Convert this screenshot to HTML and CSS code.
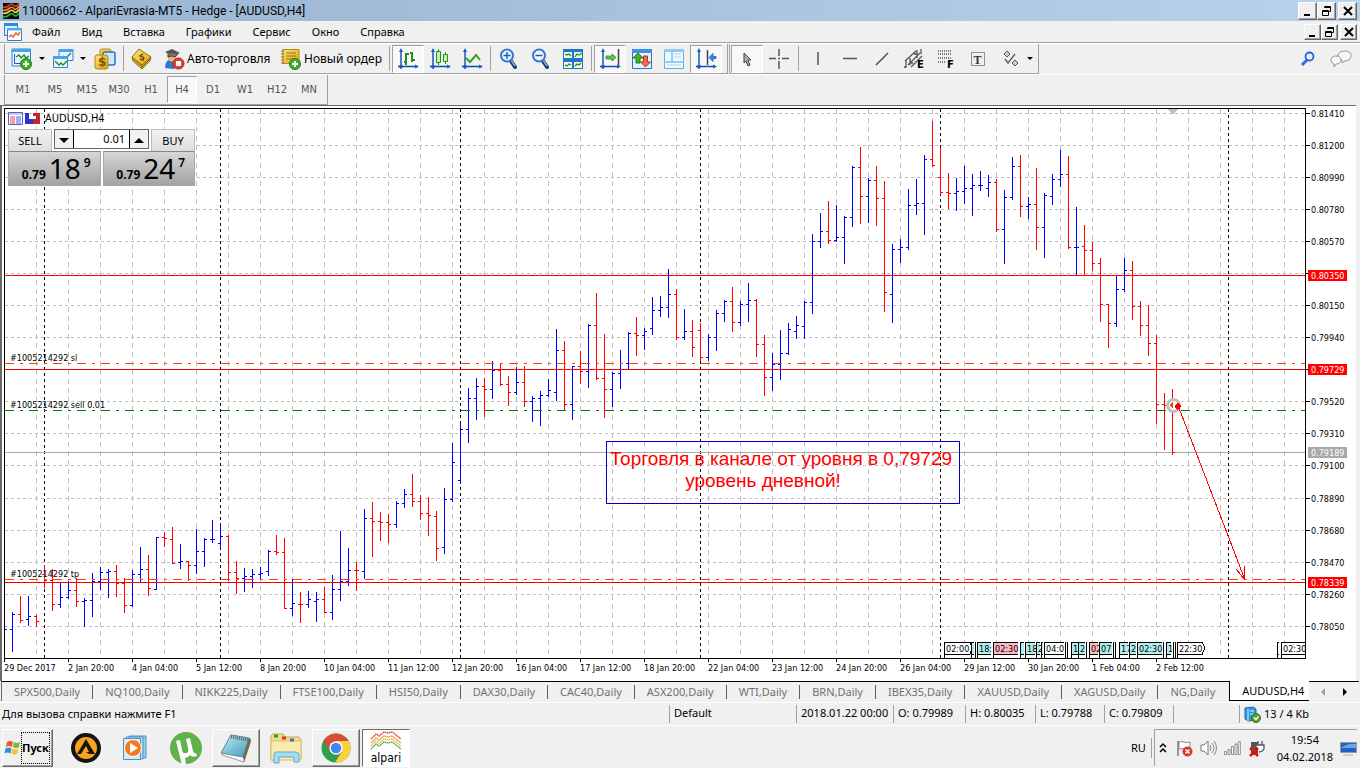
FILE: index.html
```html
<!DOCTYPE html>
<html lang="ru">
<head>
<meta charset="utf-8">
<title>11000662 - AlpariEvrasia-MT5 - Hedge - [AUDUSD,H4]</title>
<link rel="stylesheet" href="styles.css">
</head>
<body>
<svg width="0" height="0" class="defs" aria-hidden="true">
  <defs>
    <linearGradient id="gold" x1="0" y1="0" x2="1" y2="1"><stop offset="0" stop-color="#ffe87c"/><stop offset="1" stop-color="#d99a10"/></linearGradient>
    <linearGradient id="note" x1="0" y1="0" x2="1" y2="1"><stop offset="0" stop-color="#c4edf6"/><stop offset="1" stop-color="#3e9ab8"/></linearGradient>
    <symbol id="min" viewBox="0 0 12 12"><path d="M2 9h6v2H2z"/></symbol>
    <symbol id="restore" viewBox="0 0 12 12"><path d="M3.500 1.500h6v5h-2M3 2.500h7M1.500 5.500h6v5h-6zM1 6.500h7" fill="none" stroke="#000"/></symbol>
    <symbol id="close" viewBox="0 0 12 12"><path d="M2 2l8 8M10 2l-8 8" stroke="#000" stroke-width="2"/></symbol>
    <symbol id="plus" viewBox="0 0 12 12"><circle cx="6" cy="6" r="5.500" fill="#3fae29" stroke="#1f7d12"/><path d="M6 3v6M3 6h6" stroke="#fff" stroke-width="2"/></symbol>
    <symbol id="axes" viewBox="0 0 22 22"><path d="M4 2v19M1 18.500h19" stroke="#0a4fb5" stroke-width="1.400" fill="none"/><path d="M4 0l2 4H2zM22 18.500l-4 2v-4zM2.500 17h3v3h-3z" fill="#1a5bc0"/></symbol>
    <symbol id="lens" viewBox="0 0 20 22"><path d="M12 13l4 6" stroke="#16356f" stroke-width="4" stroke-linecap="round"/><path d="M12 12l4 6" stroke="#86aede" stroke-width="1.500"/><circle cx="8" cy="7.500" r="6" fill="#edf6ff" stroke="#3379cf" stroke-width="2"/></symbol>
  </defs>
</svg>

<header class="title-bar">
  <svg class="app-icon" width="16" height="16" viewBox="0 0 16 16" aria-hidden="true"><path fill="#0c0c0c" d="M0 0h16v16H0z"/><g fill="none" stroke-width="1.700"><path d="M0 4q3 1 6-1.500t5 0 5-2" stroke="#e2372c"/><path d="M0 7q3 1 6-1.500t5 0 5-2" stroke="#f58a2b"/><path d="M0 10q3 1 6-1.500t5 0 5-2" stroke="#e8d63c"/><path d="M0 13.500q3 1 6-1.500t5 0 5-2" stroke="#35a445"/></g></svg>
  <h1 class="title">11000662 - AlpariEvrasia-MT5 - Hedge - [AUDUSD,H4]</h1>
  <div class="window-buttons">
    <button class="win-btn" aria-label="Свернуть"><svg width="12" height="12"><use href="#min"/></svg></button>
    <button class="win-btn" aria-label="Восстановить"><svg width="12" height="12"><use href="#restore"/></svg></button>
    <button class="win-btn apart" aria-label="Закрыть"><svg width="12" height="12"><use href="#close"/></svg></button>
  </div>
</header>

<nav class="menu-bar">
  <svg class="doc-icon" width="18" height="18" viewBox="0 0 18 18" aria-hidden="true"><path d="M.5.500h13v12H.5z" fill="#dff1ff" stroke="#2b7fd0"/><path d="M0 0h14v3H0z" fill="#2b8be0"/><path d="M3.500 5.500h14v12h-14z" fill="#fff" stroke="#2b7fd0"/><path d="M3 5h15v2.500H3z" fill="#54a8ee"/><path d="M5 14l2-2 2 2 3-4 2 2 2-3" fill="none" stroke="#f0663a" stroke-width="1.500"/></svg>
  <button>Файл</button><button>Вид</button><button>Вставка</button><button>Графики</button><button>Сервис</button><button>Окно</button><button>Справка</button>
  <div class="window-buttons small">
    <button class="win-btn" aria-label="Свернуть график"><svg width="12" height="12"><use href="#min"/></svg></button>
    <button class="win-btn" aria-label="Восстановить график"><svg width="12" height="12"><use href="#restore"/></svg></button>
    <button class="win-btn apart" aria-label="Закрыть график"><svg width="12" height="12"><use href="#close"/></svg></button>
  </div>
</nav>

<div class="toolbar-row">
  <div class="toolbar main-tools">
    <button class="tool menu" aria-label="Новый график"><svg width="22" height="22" viewBox="0 0 22 22"><path d="M1 1h18.500v17H1z" fill="#eaf6ff" stroke="#2b86d3"/><path d="M1 1h18.500v3H1z" fill="#4aa3ea"/><path d="M3.500 6v9.500h10" fill="none" stroke="#1b5fb8"/><path d="M5 9l3-2 2 3 3-3 2 3 3-2" fill="none" stroke="#248a1c" stroke-width="1.400"/><use href="#plus" x="9" y="10" width="12" height="12"/></svg><span class="caret"></span></button>
    <button class="tool menu" aria-label="Профили"><svg width="22" height="22" viewBox="0 0 22 22"><path d="M7 1.500h14v11H7z" fill="#eaf6ff" stroke="#2b86d3"/><path d="M7 1h14v3H7z" fill="#4aa3ea"/><path d="M11 8l3 2 5-5" stroke="#248a1c" stroke-width="1.400" fill="none"/><path d="M1.500 8.500h14v11h-14z" fill="#eaf6ff" stroke="#2b86d3"/><path d="M1.500 8h14v3h-14z" fill="#4aa3ea"/><path d="M3 13l4 4 2-2 2 2 4-4" stroke="#248a1c" stroke-width="1.400" fill="none"/></svg><span class="caret"></span></button>
    <button class="tool" aria-label="Обзор рынка"><svg width="22" height="22" viewBox="0 0 22 22"><rect x="6" y="1" width="11" height="10" rx="2" fill="#f5cf4a" stroke="#b8860b"/><rect x="9" y="4" width="12" height="13" rx="2" fill="#cfe8fb" stroke="#1f74cf" stroke-width="1.500"/><rect x="1" y="7" width="13" height="14" rx="2" fill="url(#gold)" stroke="#b8860b"/><text x="4" y="18" class="glyph dollar">$</text></svg></button>
    <span class="sep"></span>
    <button class="tool" aria-label="MetaEditor"><svg width="22" height="22" viewBox="0 0 22 22"><path d="M1 9L8 1l12 8-1 4-8 8-9-8z" fill="url(#gold)" stroke="#98700d"/><path d="M1 9l10 8 9-8M11 17v4M2 11l9 8 8-8" stroke="#8c6509" fill="none"/><path d="M12 6l-3 2 2 1q3 0 1 3l-3-1" stroke="#6d4d02" stroke-width="1.500" fill="none"/></svg></button>
    <button class="tool labelled"><svg width="22" height="22" viewBox="0 0 22 22"><path d="M2 20q0-8 6-9 5 1 8 8l-6 2z" fill="#2f78d2"/><circle cx="9" cy="9" r="4.500" fill="#e8b873"/><path d="M2 4l7-3 8 4-7 3z" fill="#555"/><path d="M5 5v4q4-2 7 0l3-3" fill="#777" stroke="#444"/><circle cx="15.500" cy="15.500" r="5.500" fill="#e5402f" stroke="#b32418"/><path d="M13 13h5v5h-5z" fill="#fff"/></svg>Авто-торговля</button>
    <button class="tool labelled order"><svg width="22" height="22" viewBox="0 0 22 22"><path d="M3 1.500h16v14H3z" fill="url(#gold)" stroke="#b58a16"/><path d="M6 5h10M6 8h10M6 11h7" stroke="#9c7406"/><path d="M1 3h3M1 6h3M1 9h3M1 12h3M1 15h3" stroke="#876a1a"/><use href="#plus" x="9" y="10" width="12" height="12"/></svg>Новый ордер</button>
    <span class="sep"></span>
    <button class="tool pressed" aria-label="Бары"><svg width="22" height="22" viewBox="0 0 22 22"><use href="#axes"/><path d="M9 5v12M7 14h2M9 6h3M15 4v10M13 5h2M15 12h3" stroke="#229016" stroke-width="2" fill="none"/></svg></button>
    <button class="tool" aria-label="Свечи"><svg width="22" height="22" viewBox="0 0 22 22"><use href="#axes"/><path d="M9.500 1v16M16.500 4v12" stroke="#229016"/><path d="M7.500 3.500h4v11h-4zM14.500 6.500h4v7h-4z" fill="#c4f3b7" stroke="#229016"/></svg></button>
    <button class="tool" aria-label="Линия"><svg width="22" height="22" viewBox="0 0 22 22"><use href="#axes"/><path d="M5 10l4 4 6-7 4 5" stroke="#32a01c" stroke-width="2" fill="none"/></svg></button>
    <span class="sep"></span>
    <button class="tool" aria-label="Увеличить"><svg width="20" height="22" viewBox="0 0 20 22"><use href="#lens"/><path d="M8 4v7M4.500 7.500h7" stroke="#1b5cb5" stroke-width="1.500"/></svg></button>
    <button class="tool" aria-label="Уменьшить"><svg width="20" height="22" viewBox="0 0 20 22"><use href="#lens"/><path d="M4.500 7.500h7" stroke="#1b5cb5" stroke-width="1.500"/></svg></button>
    <button class="tool" aria-label="Расположить окна"><svg width="22" height="22" viewBox="0 0 22 22"><path d="M1 1h20v20H1z" fill="#2276cd"/><path d="M2 4h8v6H2zM12 4h8v6h-8zM2 14h8v6H2zM12 14h8v6h-8z" fill="#eef9ec"/><path d="M3 6l2 1 2-1 2 2M13 9l2-3 2 1 3-2M3 17l2 1 2-2 2 1M13 18l2-2 2 1 2-2" stroke="#229016" stroke-width="1.300" fill="none"/></svg></button>
    <span class="sep"></span>
    <button class="tool pressed" aria-label="Сдвиг графика"><svg width="22" height="22" viewBox="0 0 22 22"><use href="#axes"/><path d="M19.500 1v16" stroke="#444" stroke-width="1.500"/><path d="M7 8h6V6l4 3.500-4 3.500v-2H7z" fill="#5bd03e" stroke="#218c16" stroke-width=".8"/></svg></button>
    <button class="tool" aria-label="Торговля"><svg width="22" height="22" viewBox="0 0 22 22"><path d="M1.500 1.500h19v19h-19z" fill="#e4f2fd" stroke="#2375cb"/><path d="M1 1h20v4H1z" fill="#3a93e3"/><path d="M7 5l5 5H9v5H5v-5H2z" fill="#43b52c" stroke="#1d7e12"/><path d="M14.500 19l5-5h-3V8h-4v6h-3z" fill="#f26d4f" stroke="#b93518"/></svg></button>
    <button class="tool" aria-label="Панели"><svg width="22" height="22" viewBox="0 0 22 22"><path d="M1.500 1.500h19v19h-19z" fill="#eef8ff" stroke="#5fb0ea"/><path d="M1 1h20v3H1z" fill="#8fcaf3"/><path d="M9 4v10M1 14h20" stroke="#7cc0ef" stroke-width="1.500"/><path d="M11 6h7M11 9h7M4 17h14" stroke="#b7cfdd"/></svg></button>
    <button class="tool pressed" aria-label="Автопрокрутка"><svg width="22" height="22" viewBox="0 0 22 22"><use href="#axes"/><path d="M12.500 2v15" stroke="#444" stroke-width="1.500"/><path d="M14 9.500l4-4v3h3v2h-3v3z" fill="#3f86e0" stroke="#1a5bc0" stroke-width=".8"/></svg></button>
  </div>
  <div class="toolbar draw-tools">
    <button class="tool pressed" aria-label="Курсор"><svg width="22" height="22" viewBox="0 0 22 22"><path d="M8 5v10l2-2 2 5 2-1-2-5h3z" fill="#aaa" stroke="#444"/></svg></button>
    <button class="tool" aria-label="Перекрестие"><svg width="22" height="22" viewBox="0 0 22 22"><path d="M11 1v7M11 13v8M1 10.500h7M14 10.500h7M10 10.500h2" stroke="#555" stroke-width="1.500"/></svg></button>
    <span class="sep"></span>
    <button class="tool" aria-label="Вертикальная линия"><svg width="22" height="22" viewBox="0 0 22 22"><path d="M11 4v13" stroke="#555" stroke-width="1.500"/></svg></button>
    <button class="tool" aria-label="Горизонтальная линия"><svg width="22" height="22" viewBox="0 0 22 22"><path d="M4 10.500h14" stroke="#555" stroke-width="1.500"/></svg></button>
    <button class="tool" aria-label="Трендовая линия"><svg width="22" height="22" viewBox="0 0 22 22"><path d="M5 17L17 5" stroke="#555" stroke-width="1.600"/></svg></button>
    <button class="tool" aria-label="Канал"><svg width="22" height="22" viewBox="0 0 22 22"><path d="M2 13L13 3M8 19L19 8M5 17L17 5M3 12v8M7 10v7M14 2v8M18 1v5M1 19h2M7 15h3M11 6h3" stroke="#555" stroke-width="1.300" fill="none"/><text x="14" y="20" class="glyph">E</text></svg></button>
    <button class="tool" aria-label="Фибоначчи"><svg width="22" height="22" viewBox="0 0 22 22"><path d="M3 3h13M3 6h13M3 10h13M3 14h7" stroke="#555" stroke-width="1.500" stroke-dasharray="1 1"/><text x="12" y="20" class="glyph">F</text></svg></button>
    <button class="tool" aria-label="Текст"><svg width="22" height="22" viewBox="0 0 22 22"><path d="M4.500 4.500h13v13h-13z" fill="none" stroke="#333" stroke-dasharray="1 1"/><text x="6.500" y="15.500" class="glyph serif">T</text></svg></button>
    <button class="tool menu shapes" aria-label="Фигуры"><svg width="22" height="22" viewBox="0 0 22 22"><path d="M7 3l3 3-3 3-3-3zM15 12l3 3-3 3-3-3z" fill="#ccc" stroke="#555"/><path d="M5 11l3 4 7-9" stroke="#666" stroke-width="1.500" fill="none"/></svg><span class="caret"></span></button>
  </div>
  <div class="right-tools">
    <button class="tool" aria-label="Поиск"><svg width="16" height="16" viewBox="0 0 16 16"><path d="M2 14l5-5" stroke="#2d6ede" stroke-width="3"/><circle cx="9.500" cy="5.500" r="4" fill="#e3efff" stroke="#2466d8" stroke-width="1.800"/></svg></button>
    <button class="tool" aria-label="Чат"><svg width="24" height="18" viewBox="0 0 24 18"><path d="M9 6q0-5 7-5t6 6q-1 4-6 4l-3 2v-3q-4-1-4-4z" fill="#f5f5fa" stroke="#999"/><path d="M2 10q0-4 5-4t5 4q0 4-5 4l-2 3v-3q-3-1-3-4z" fill="#f5f5fa" stroke="#999"/></svg></button>
  </div>
</div>

<div class="timeframe-row">
  <div class="toolbar timeframes">
    <button>M1</button><button>M5</button><button>M15</button><button>M30</button><button>H1</button><button class="pressed">H4</button><button>D1</button><button>W1</button><button>H12</button><button>MN</button>
  </div>
</div>

<main class="chart-window">
  <svg class="chart" id="chart" role="img" aria-label="График AUDUSD,H4"></svg>
  <div class="chart-caption">
    <svg width="34" height="13" viewBox="0 0 34 13" aria-hidden="true"><path d="M.5.500h14v12H.5z" fill="#fff" stroke="#5560c8"/><path d="M1 1h13v2H1z" fill="#c3c9f4"/><path d="M2 5h5M2 7h5M2 9h5M2 11h5" stroke="#e24a4a"/><path d="M8 5h5M8 7h5M8 9h5M8 11h5" stroke="#4a5fe2"/><path d="M17 1h4v6h6v5H17z" fill="#2a33d8"/><path d="M25 1h7v11h-7V7h3V4h-3z" fill="#c1272d"/></svg>
    <span>AUDUSD,H4</span>
  </div>
  <form class="one-click">
    <button type="button" class="deal-tab">SELL</button>
    <div class="volume">
      <button type="button" aria-label="Уменьшить объём"><span class="arrow down"></span></button>
      <input type="text" value="0.01" aria-label="Объём">
      <button type="button" aria-label="Увеличить объём"><span class="arrow up"></span></button>
    </div>
    <button type="button" class="deal-tab">BUY</button>
    <div class="quotes">
      <button type="button" class="quote"><b>0.79</b><span>18</span><sup>9</sup></button>
      <button type="button" class="quote"><b>0.79</b><span>24</span><sup>7</sup></button>
    </div>
  </form>
  <p class="note">Торговля в канале от уровня в 0,79729<br><span>уровень дневной!</span></p>
</main>

<nav class="chart-tabs">
  <a href="#spx">SPX500,Daily</a><a href="#nq">NQ100,Daily</a><a href="#nikk">NIKK225,Daily</a><a href="#ftse">FTSE100,Daily</a><a href="#hsi">HSI50,Daily</a><a href="#dax">DAX30,Daily</a><a href="#cac">CAC40,Daily</a><a href="#asx">ASX200,Daily</a><a href="#wti">WTI,Daily</a><a href="#brn">BRN,Daily</a><a href="#ibex">IBEX35,Daily</a><a href="#xau">XAUUSD,Daily</a><a href="#xag">XAGUSD,Daily</a><a href="#ng">NG,Daily</a><a href="#chart" class="active" aria-current="page">AUDUSD,H4</a>
  <button class="scroll off" aria-label="Назад"><span class="tri left"></span></button>
  <button class="scroll" aria-label="Вперёд"><span class="tri"></span></button>
</nav>

<footer class="status-bar">
  <span>Для вызова справки нажмите F1</span>
  <span>Default</span>
  <span>2018.01.22 00:00</span>
  <span>O: 0.79989</span>
  <span>H: 0.80035</span>
  <span>L: 0.79788</span>
  <span>C: 0.79809</span>
  <span></span>
  <span class="traffic"><svg width="17" height="17" viewBox="0 0 17 17" aria-hidden="true"><path d="M1 2l8-1 3 2v11l-8 1-3-2z" fill="#2f9be6" stroke="#1668ac"/><path d="M4 3v12M6 5h4M6 8h4" stroke="#d4efff"/><circle cx="12" cy="12" r="4.500" fill="#54a32e" stroke="#2d7014"/><path d="M10 11.500l2 2 2.500-3" stroke="#fff" stroke-width="1.500" fill="none"/></svg>13 / 4 Kb</span>
</footer>

<div class="taskbar">
  <button class="start"><svg width="17" height="16" viewBox="0 0 17 16" aria-hidden="true"><path d="M3 2q3-2 6 0L8 7Q5 5 2 7z" fill="#e8592b"/><path d="M10 2q3 2 6 0l-1 5q-3 2-6 0z" fill="#7db53c"/><path d="M1.500 8.500q3-2 6 0l-1 5q-3-2-6 0z" fill="#3a8ad8"/><path d="M8.500 8.500q3 2 6 0l-1 5q-3 2-6 0z" fill="#f5c431"/></svg><b>Пуск</b></button>
  <button class="task" aria-label="AIMP"><svg width="32" height="32" viewBox="0 0 32 32"><circle cx="16" cy="16" r="13" fill="#f9a51b" stroke="#151515" stroke-width="4"/><path fill-rule="evenodd" d="M16 7l9 15h-6l-3-2h3l-3-6-5 8H7z" fill="#151515"/></svg></button>
  <button class="task" aria-label="Медиаплеер"><svg width="32" height="32" viewBox="0 0 32 32"><path d="M9 4h17v22H9z" fill="#9ccdea" stroke="#4d93bf"/><path d="M6 5h17v22H6z" fill="#b9def3" stroke="#4d93bf"/><path d="M3.500 6.500h17v21h-17z" fill="#d2ebf8" stroke="#4d93bf"/><circle cx="13" cy="16" r="8.500" fill="#f47a1f" stroke="#fff"/><path d="M10 11v10l8-5z" fill="#fff"/></svg></button>
  <button class="task" aria-label="uTorrent"><svg width="34" height="34" viewBox="0 0 34 34"><circle cx="17" cy="17" r="16" fill="#62b14c"/><path d="M7 10l4-1 2 10q1 4 4 3 3 0 2-5l-2-9 4-1 3 13q1 3 3 2l1 3q-5 2-7-1-2 3-5 3l1 6-4 1z" fill="#fff"/></svg></button>
  <button class="task open" aria-label="Блокнот"><svg width="32" height="32" viewBox="0 0 32 32"><path d="M11 3l20 4-7 23-22-7z" fill="#fff" stroke="#999"/><path d="M11 3l18 3-6 19-22-4z" fill="url(#note)" stroke="#4d8ba3"/><path d="M29 6l2 3-7 21-1-5z" fill="#77644b"/><path d="M11 5l18 3" stroke="#666" stroke-width="3" stroke-dasharray="1 1"/></svg></button>
  <button class="task" aria-label="Проводник"><svg width="34" height="32" viewBox="0 0 34 32"><path d="M2 4l2-2h10l2 3h14l2 3v19l-30 1z" fill="#f3d989" stroke="#caa64d"/><path d="M2 9h30v19H2z" fill="#fbebae" stroke="#dcbf6d"/><path d="M5 4h4" stroke="#24a148" stroke-width="3"/><path d="M13 6h4" stroke="#d33" stroke-width="3"/><path d="M21 8h4" stroke="#2678c9" stroke-width="3"/><path d="M7 20h20q3 0 3 3v7h-5v-5H10v6H5v-8q0-3 2-3z" fill="#a6dcf5" stroke="#60a9cf"/></svg></button>
  <button class="task open" aria-label="Chrome"><svg width="32" height="32" viewBox="0 0 32 32"><circle cx="16" cy="16" r="14.500" fill="#2f9e4f"/><path d="M3.500 8.700A14.500 14.500 0 0 1 28.600 9H16l-6 10z" fill="#dd4b39"/><path d="M28.600 9A14.500 14.500 0 0 1 15 30.500L22 19.500 16 9z" fill="#fdd13a"/><circle cx="16" cy="16" r="6.700" fill="#fff"/><circle cx="16" cy="16" r="5.300" fill="#4285f4"/></svg></button>
  <button class="task active"><svg width="32" height="20" viewBox="0 0 32 20" aria-hidden="true"><g fill="none" stroke-width="1.300" stroke-dasharray="1.500 .5"><path d="M1 8l5-5 3 2 5-4 4 1 4-1 4 3 5 4" stroke="#dd3a2e"/><path d="M1 12l5-5 3 2 5-4 4 1 4-1 4 3 5 4" stroke="#ee8a2c"/><path d="M1 15l5-5 3 2 5-4 4 1 4-1 4 3 5 4" stroke="#cfc02b"/><path d="M1 18l5-5 3 2 5-4 4 1 4-1 4 3 5 4" stroke="#4d9d3a"/></g></svg><span>alpari</span></button>
  <span class="lang">RU</span>
  <div class="tray">
    <button aria-label="Скрытые значки"><svg width="8" height="12" viewBox="0 0 8 12"><path d="M1 5l3-3 3 3M1 10l3-3 3 3" stroke="#000" stroke-width="1.500" fill="none"/></svg></button>
    <svg width="17" height="17" viewBox="0 0 17 17" aria-hidden="true"><path d="M2 1v15" stroke="#777" stroke-width="1.500"/><path d="M3 2q3-1 5 0t6 0v7q-3 1-5 0t-6 0z" fill="#fff" stroke="#888"/><circle cx="11.500" cy="11.500" r="5" fill="#d9352b"/><path d="M9.500 9.500l4 4M13.500 9.500l-4 4" stroke="#fff" stroke-width="1.500"/></svg>
    <svg width="17" height="16" viewBox="0 0 17 16" aria-hidden="true"><path d="M1 5h3l4-4v14l-4-4H1z" fill="#fff" stroke="#777"/><path d="M10 5q2 3 0 6M12 3q4 5 0 10M14 1q5 7 0 14" fill="none" stroke="#888"/></svg>
    <svg width="17" height="14" viewBox="0 0 17 14" aria-hidden="true"><path d="M.5 10.500h2v3h-2zM4 8.500h2v5H4zM7.500 5.500h2v8h-2zM11 3h2v10.500h-2zM14.300.500h2v13h-2z" fill="#fff" stroke="#777" stroke-width=".8"/></svg>
    <svg width="17" height="17" viewBox="0 0 17 17" aria-hidden="true"><path d="M3 2h7v13H3z" fill="#555"/><path d="M8 5h8v4q-2 3-5 3M10 1v4M14 1v4" fill="#fff" stroke="#555" stroke-width="1.300"/><path d="M2 8l8 8M10 8l-8 8" stroke="#d91414" stroke-width="2.500"/></svg>
    <time class="clock" datetime="2018-02-04T19:54">19:54<br>04.02.2018</time>
    <svg class="desk" width="17" height="15" viewBox="0 0 17 15" aria-hidden="true"><path d="M.5 1.500h16v10H.5z" fill="#2460bf" stroke="#999"/><path d="M1 7Q8 2 16 3v4z" fill="#65a6ec"/><path d="M3 14h10" stroke="#aaa"/></svg>
  </div>
</div>
<script src="chart.js"></script>
</body>
</html>
```
FILE: styles.css
```css
* { box-sizing: border-box; }
body {
  margin: 0;
  min-height: 100vh;
  display: flex;
  flex-direction: column;
  background: #f0f0f0;
  color: #000;
  font: 11px/16px "Noto Sans", "Open Sans", sans-serif;
}
button, input { font: inherit; color: inherit; margin: 0; padding: 0; border: 0; background: none; }
a { color: inherit; text-decoration: none; }
svg { display: block; flex: none; }
.defs { position: absolute; }

/* title and menu */
.title-bar {
  height: 21px;
  display: flex;
  align-items: center;
  gap: 3px;
  padding: 0 3px;
  background: linear-gradient(90deg, #99b4d1, #b9d1ea);
}
.title { margin: 0; font: 12px/16px Roboto, "Noto Sans", sans-serif; }
.window-buttons { display: flex; margin-left: auto; }
.win-btn {
  width: 19px;
  height: 18px;
  display: grid;
  place-items: center;
  background: #f0f0f0;
  border: 1px solid;
  border-color: #fff #696969 #696969 #fff;
  box-shadow: inset -1px -1px #a0a0a0;
}
.win-btn.apart { margin-left: 2px; }
.small .win-btn { width: 17px; height: 16px; }
.menu-bar {
  height: 22px;
  display: flex;
  align-items: center;
  padding: 0 3px 0 4px;
  border-bottom: 1px solid #a0a0a0;
}
.menu-bar > button { padding: 0 11px 0 10px; }

/* toolbars */
.toolbar-row {
  height: 31px;
  display: flex;
  border-top: 1px solid #fff;
}
.toolbar {
  display: flex;
  align-items: center;
  border: solid #a0a0a0;
  border-width: 0 1px 1px;
  margin-left: 4px;
}
.main-tools { flex: 0 0 724px; padding-left: 2px; }
.draw-tools { flex: 0 0 304px; margin-left: 1px; padding-left: 1px; }
.tool {
  flex: none;
  width: 32px;
  height: 28px;
  display: flex;
  align-items: center;
  justify-content: center;
}
.tool.menu { width: 41px; gap: 6px; }
.tool.menu.shapes { width: 44px; gap: 5px; }
.tool.labelled { width: 119px; gap: 2px; padding-left: 5px; justify-content: flex-start; font-size: 12px; }
.tool.labelled.order { width: 110px; padding-left: 3px; }
.pressed {
  background: #f8f8f8;
  border: 1px solid;
  border-color: #a0a0a0 #fff #fff #a0a0a0;
}
.caret { border: 3px solid transparent; border-top-color: #000; border-bottom: 0; }
.sep { flex: none; width: 1px; height: 25px; margin: 0 2px; background: #a0a0a0; }
.draw-tools .sep { margin: 0 3px; }
.right-tools { display: flex; align-items: center; gap: 1px; margin-left: auto; padding-right: 3px; }
.glyph { font: bold 10px "DejaVu Sans", sans-serif; }
.dollar { font-size: 12px; fill: #7b5700; }
.serif { font: bold 12px "Liberation Serif", serif; fill: #333; }

.timeframe-row { height: 31px; display: flex; border-top: 1px solid #fff; }
.timeframes {
  width: 324px;
  padding-left: 2px;
  color: #555;
  font-family: "DejaVu Sans Condensed", "Noto Sans", sans-serif;
}
.timeframes button { width: 32px; height: 27px; }
.timeframes .pressed { width: 30px; }

/* chart */
.chart-window {
  position: relative;
  flex: 1;
  display: flex;
  min-height: 576px;
  margin-right: 4px;
  background: #fff;
  border: solid #696969;
  border-width: 1px 0 0 2px;
}
.chart { flex: 1; width: 100%; font: 9px "DejaVu Sans Condensed", "Noto Sans", sans-serif; shape-rendering: crispEdges; }
.chart .smooth { shape-rendering: auto; }
.chart-caption {
  position: absolute;
  top: 6px;
  left: 6px;
  display: flex;
  align-items: center;
  gap: 3px;
  height: 13px;
  font: 11px/13px "DejaVu Sans Condensed", "Noto Sans", sans-serif;
}
.one-click {
  position: absolute;
  top: 23px;
  left: 6px;
  width: 187px;
  display: grid;
  grid-template-columns: 44px minmax(0, 1fr) 44px;
  gap: 0 2px;
  background: #fff;
}
.deal-tab {
  height: 22px;
  background: linear-gradient(#f2f2f2, #dedede);
  border: solid #bdbdbd;
  border-width: 1px 1px 0;
}
.volume { display: flex; height: 20px; border: 1px solid #666; }
.volume button { flex: none; width: 18px; background: #f2f2f2; }
.volume input {
  flex: 1;
  min-width: 0;
  padding-right: 4px;
  text-align: right;
  background: #fff;
  border: solid #000;
  border-width: 0 1px;
}
.arrow { display: inline-block; border: 5px solid transparent; vertical-align: middle; }
.arrow.down { border-top-color: #000; border-bottom: 0; }
.arrow.up { border-bottom-color: #000; border-top: 0; }
.quotes { grid-column: 1 / -1; display: grid; grid-template-columns: 1fr 1fr; gap: 2px; }
.quote {
  display: flex;
  align-items: flex-end;
  justify-content: center;
  gap: 3px;
  height: 35px;
  padding-left: 4px;
  background: linear-gradient(#d6d6d6, #a2a2a2);
  border: 1px solid #a8a8a8;
  border-top-color: #888;
}
.quote b { font-size: 12px; line-height: 20px; }
.quote span { font-size: 28px; line-height: 33px; }
.quote sup { align-self: flex-start; font-size: 12px; font-weight: 600; line-height: 22px; }
.note {
  position: absolute;
  top: 335px;
  left: 604px;
  width: 354px;
  height: 63px;
  margin: 0;
  padding: 6px 4px 0 0;
  border: 1px solid #0000c8;
  color: #f00;
  font: 19px/22px "Liberation Sans", sans-serif;
  text-align: center;
  white-space: nowrap;
}
.note span { padding-right: 36px; }

/* chart tabs */
.chart-tabs {
  height: 20px;
  display: flex;
  align-items: center;
  margin: 0 1px 1px;
  border-left: 1px solid #696969;
  border-top: 1px solid #000;
  color: #707070;
}
.chart-tabs a { padding: 0 12px; line-height: 14px; border-right: 1px solid #606060; white-space: nowrap; }
.chart-tabs a:nth-last-of-type(2) { padding-right: 14px; border-right: 0; }
.chart-tabs .active {
  align-self: stretch;
  padding: 1px 5px 0 12px;
  margin-top: -1px;
  margin-right: auto;
  line-height: 17px;
  background: #fff;
  color: #000;
  border: solid #000;
  border-width: 0 0 1px 1px;
}
.scroll { width: 22px; height: 18px; display: grid; place-items: center; }
.scroll:last-child { margin-right: 3px; }
.tri { border: 4px solid transparent; border-left-color: #000; border-right: 0; }
.tri.left { border-left: 0; border-right: 4px solid #a0a0a0; }

/* status bar */
.status-bar {
  height: 23px;
  display: grid;
  grid-template-columns: 1fr 127px 97px 72px 70px 69px 69px 66px 121px;
  align-items: center;
  padding-left: 2px;
  border-top: 1px solid #fff;
  white-space: nowrap;
}
.status-bar span + span { height: 18px; padding-left: 4px; border-left: 1px solid #a0a0a0; }
.traffic { display: flex; align-items: center; gap: 3px; }

/* taskbar */
.taskbar {
  height: 43px;
  display: flex;
  align-items: center;
  padding: 1px 3px 0 2px;
  border-top: 1px solid #fff;
}
.start {
  width: 51px;
  height: 38px;
  display: flex;
  align-items: center;
  padding-left: 1px;
  margin-right: 9px;
  border: 1px solid;
  border-color: #fff #696969 #696969 #fff;
  box-shadow: inset -1px -1px #a0a0a0;
}
.start b { padding: 7px 0; border: 1px dotted #000; }
.task { width: 48px; height: 38px; display: grid; place-items: center; margin-right: 2px; }
.task.open { border: 1px solid; border-color: #fff #696969 #696969 #fff; box-shadow: inset -1px -1px #a0a0a0; }
.task.active {
  background: #fff;
  padding-top: 1px;
  border: 1px solid;
  border-color: #696969 #fff #fff #696969;
  font: 12px/13px "DejaVu Sans Condensed", sans-serif;
}
.lang { margin-left: auto; margin-right: 2px; padding-right: 5px; border-right: 1px solid #a0a0a0; line-height: 20px; }
.tray {
  height: 37px;
  display: flex;
  align-items: center;
  gap: 7px;
  padding-left: 4px;
  border-top: 1px solid #a0a0a0;
  border-left: 1px solid #a0a0a0;
}
.tray button { margin-right: 2px; }
.clock { margin-left: 5px; text-align: center; line-height: 17px; }
```
FILE: chart.js
```js
// Bars of the H4 series, 8px apart: [high, low, open, close] in chart pixels; the colour follows the direction.
const bars = `612 652 629 614 b|596 623 614 620 r|596 626 619 616 b|615 627 616 621 r|565 588 574 580 r|569 611 580 604 r|582 608 604 597 b|581 599 597 590 b|578 607 590 601 r|598 627 601 600 b|573 617 600 581 b|567 590 581 572 b|569 598 572 571 b|565 597 571 583 r|578 613 583 605 r|570 607 605 574 b|547 582 574 569 b|555 596 569 588 r|537 590 589 537 b|532 547 537 538 r|527 564 539 563 r|544 569 562 561 b|561 581 561 565 r|529 574 565 551 b|538 567 551 539 b|520 543 539 539 b|523 549 543 536 b|535 581 536 572 r|561 594 572 578 r|568 592 578 576 b|569 588 576 574 b|567 579 574 573 b|550 576 571 551 b|535 555 551 552 r|538 609 552 608 r|579 616 608 603 b|592 623 604 604 r|591 608 604 599 b|592 622 601 599 b|587 613 599 612 r|575 620 612 589 b|531 601 589 581 b|548 586 581 570 b|562 591 570 570 r|509 579 571 518 b|502 557 518 521 r|512 541 521 522 r|514 543 522 524 r|501 528 524 503 b|489 508 503 494 b|474 507 494 501 r|495 520 501 513 r|497 536 513 515 r|511 561 516 548 r|488 554 547 499 b|443 502 499 462 b|423 481 480 429 b|388 443 429 398 b|378 420 398 386 b|378 417 386 389 r|361 399 389 370 b|364 386 370 384 r|376 406 384 392 r|367 395 392 382 b|366 407 382 401 r|396 422 401 398 b|391 426 398 395 b|379 397 395 390 b|329 401 392 350 b|341 410 350 404 r|366 420 404 366 b|351 384 366 371 r|324 388 371 325 b|293 380 325 378 r|334 418 378 389 r|372 407 389 373 b|350 389 373 363 b|332 369 363 333 b|317 356 333 335 r|328 350 335 331 b|297 335 328 310 b|296 317 310 307 b|269 318 307 294 b|289 340 294 337 r|309 340 337 331 b|320 357 331 347 r|323 361 330 357 r|334 361 357 337 b|310 351 337 313 b|300 322 313 301 b|287 332 301 322 r|301 326 322 304 b|283 322 304 300 b|299 357 300 344 r|335 396 344 377 r|353 391 377 364 b|330 380 364 353 b|323 355 353 329 b|316 339 331 325 b|301 339 326 302 b|234 314 302 241 b|213 248 241 231 b|201 244 231 240 r|205 242 240 237 b|216 264 237 217 b|166 227 217 167 b|147 224 167 196 r|178 223 196 180 b|166 226 180 198 r|181 312 198 292 r|244 323 294 249 b|239 263 249 247 b|189 250 247 205 b|179 215 205 203 b|155 235 203 159 b|121 167 159 165 r|148 195 177 192 r|173 209 192 193 r|178 211 193 191 b|166 204 191 188 b|174 216 188 185 b|171 191 185 185 b|175 197 188 182 b|179 232 182 229 r|190 264 229 197 b|157 200 197 166 b|155 217 166 206 r|197 219 206 204 b|168 250 204 227 r|193 258 227 195 b|174 205 196 179 b|150 187 179 174 b|156 249 174 247 r|207 275 247 247 b|225 275 246 250 r|242 271 250 263 r|258 322 263 304 r|304 348 304 323 r|276 327 323 289 b|258 292 289 270 b|261 320 270 306 r|301 336 306 325 r|305 356 325 343 r|335 424 343 404 r|393 450 404 405 r|389 455 405 452 r`;
const prices = [[113, '0.81410'], [145, '0.81200'], [177, '0.80990'], [209, '0.80780'], [241, '0.80570'], [273, ''], [305, '0.80150'], [337, '0.79940'], [369, ''], [401, '0.79520'], [433, '0.79310'], [465, '0.79100'], [498, '0.78890'], [530, '0.78680'], [562, '0.78470'], [594, '0.78260'], [626, '0.78050']];
const dates = ['29 Dec 2017', '2 Jan 20:00', '4 Jan 04:00', '5 Jan 12:00', '8 Jan 20:00', '10 Jan 04:00', '11 Jan 12:00', '12 Jan 20:00', '16 Jan 04:00', '17 Jan 12:00', '18 Jan 20:00', '22 Jan 04:00', '23 Jan 12:00', '24 Jan 20:00', '26 Jan 04:00', '29 Jan 12:00', '30 Jan 20:00', '1 Feb 04:00', '2 Feb 12:00'];
// News flags on the time axis: [left, width, text, fill]
const flags = [[944, 26, '02:00', '#fff'], [971, 3, '', '#afeeee'], [975, 1, '', '#fff'], [977, 14, '18:', '#afeeee'], [993, 25, '02:30', '#ffb6c1'], [1020, 4, '', '#afeeee'], [1025, 10, '18', '#afeeee'], [1036, 4, '2', '#afeeee'], [1041, 2, '', '#afeeee'], [1044, 20, '04:0', '#fff'], [1065, 1, '', '#fff'], [1067, 1, '', '#fff'], [1071, 7, '1', '#afeeee'], [1078, 7, '2', '#afeeee'], [1086, 1, '', '#fff'], [1089, 9, '02', '#ffb6c1'], [1099, 13, '07', '#afeeee'], [1113, 1, '', '#fff'], [1115, 1, '', '#fff'], [1119, 9, '17', '#afeeee'], [1129, 7, '2', '#afeeee'], [1137, 25, '02:30', '#afeeee'], [1163, 1, '', '#fff'], [1166, 5, '1', '#afeeee'], [1173, 1, '', '#fff'], [1175, 1, '', '#fff'], [1177, 26, '22:30', '#fff'], [1277, 2, '', '#fff'], [1281, 24, '02:30', '#fff']];

const out = [];
const path = (d, stroke, extra = '') => out.push(`<path d="${d}" fill="none" stroke="${stroke}" ${extra}/>`);
const label = (x, y, s, extra = '') => out.push(`<text x="${x}" y="${y}" ${extra}>${s}</text>`);
const levels = (ys) => ys.map((y) => `M5 ${y}.5H1305`).join('');
const columns = (xs) => xs.map((x) => `M${x}.5 109V658`).join('');

const gridX = [];
for (let x = 36; x < 1305; x += 32) gridX.push(x);
path(levels(prices.map((p) => p[0])), '#c0c0c0', 'stroke-dasharray="3 3"');
path(columns(gridX), '#c0c0c0', 'stroke-dasharray="5 4"');
path(columns([44, 220, 460, 700, 940, 1228]), '#000', 'stroke-dasharray="3 3"');
path(levels([452]), '#a9a9a9');

const byColour = { b: 'M5 629.5h2', r: '' };
bars.split('|').forEach((bar, i) => {
  const [high, low, open, close, colour] = bar.split(' ');
  const x = 12 + i * 8;
  byColour[colour] += `M${x}.5 ${high}V${low}M${x - 2} ${open}.5h3M${x} ${close}.5h3`;
});
path(byColour.b, '#00f');
path(byColour.r, '#f00');

path(levels([363, 579]), '#ff4500', 'stroke-dasharray="9 6 3 6"');
path(levels([410]), '#008000', 'stroke-dasharray="9 6 3 6"');
path(levels([275, 369, 582]), '#f00');
label(10, 361, '#1005214292 sl');
label(10, 408, '#1005214292 sell 0.01');
label(10, 577, '#1005214292 tp');

out.push('<circle cx="1173.500" cy="405.500" r="6" fill="#fff" stroke="#c0c0c0" stroke-width="3" class="smooth"/>');
out.push('<path d="M1169 405l4-3v6z" fill="#e2471d"/><path d="M1175 405l3-2 3 3-3 4-3-2z" fill="#f00"/>');
path('M1179 408L1245 580L1236 569M1245 580L1244 566', '#f00');
out.push('<path d="M1167 109h11l-5 5z" fill="#c0c0c0"/>');

flags.forEach(([x, w, s, fill]) => {
  out.push(`<svg x="${x}" y="642" width="${w + 1}" height="16"><path d="M0 0h${w}v12H0z" fill="${fill}"/><path d="M.5 16V.5H${w}M.5 12.500H${w}" fill="none" stroke="#000"/><text x="2" y="10">${s}</text></svg>`);
});
path('M970 642l2 6-2 6M1202 642l3 6-3 6', '#000');

path('M4.5 659V108.500H1305.500V659M4 658.500H1306', '#000');
path(prices.map((p) => `M1306 ${p[0]}.5h4`).join(''), '#000');
path(dates.map((d, i) => `M${4 + i * 64}.5 659v3`).join(''), '#000');
prices.forEach(([y, s]) => label(1311, y + 4, s));
dates.forEach((d, i) => label(4 + i * 64, 671, d));
[[275, '0.80350', '#f00'], [369, '0.79729', '#f00'], [452, '0.79189', '#a9a9a9'], [582, '0.78339', '#f00']].forEach(([y, s, fill]) => {
  out.push(`<rect x="1308" y="${y - 5}" width="39" height="11" fill="${fill}"/>`);
  label(1311, y + 4, s, 'fill="#fff"');
});

document.getElementById('chart').innerHTML = `<g transform="translate(-2 -106)">${out.join('')}</g>`;
```
